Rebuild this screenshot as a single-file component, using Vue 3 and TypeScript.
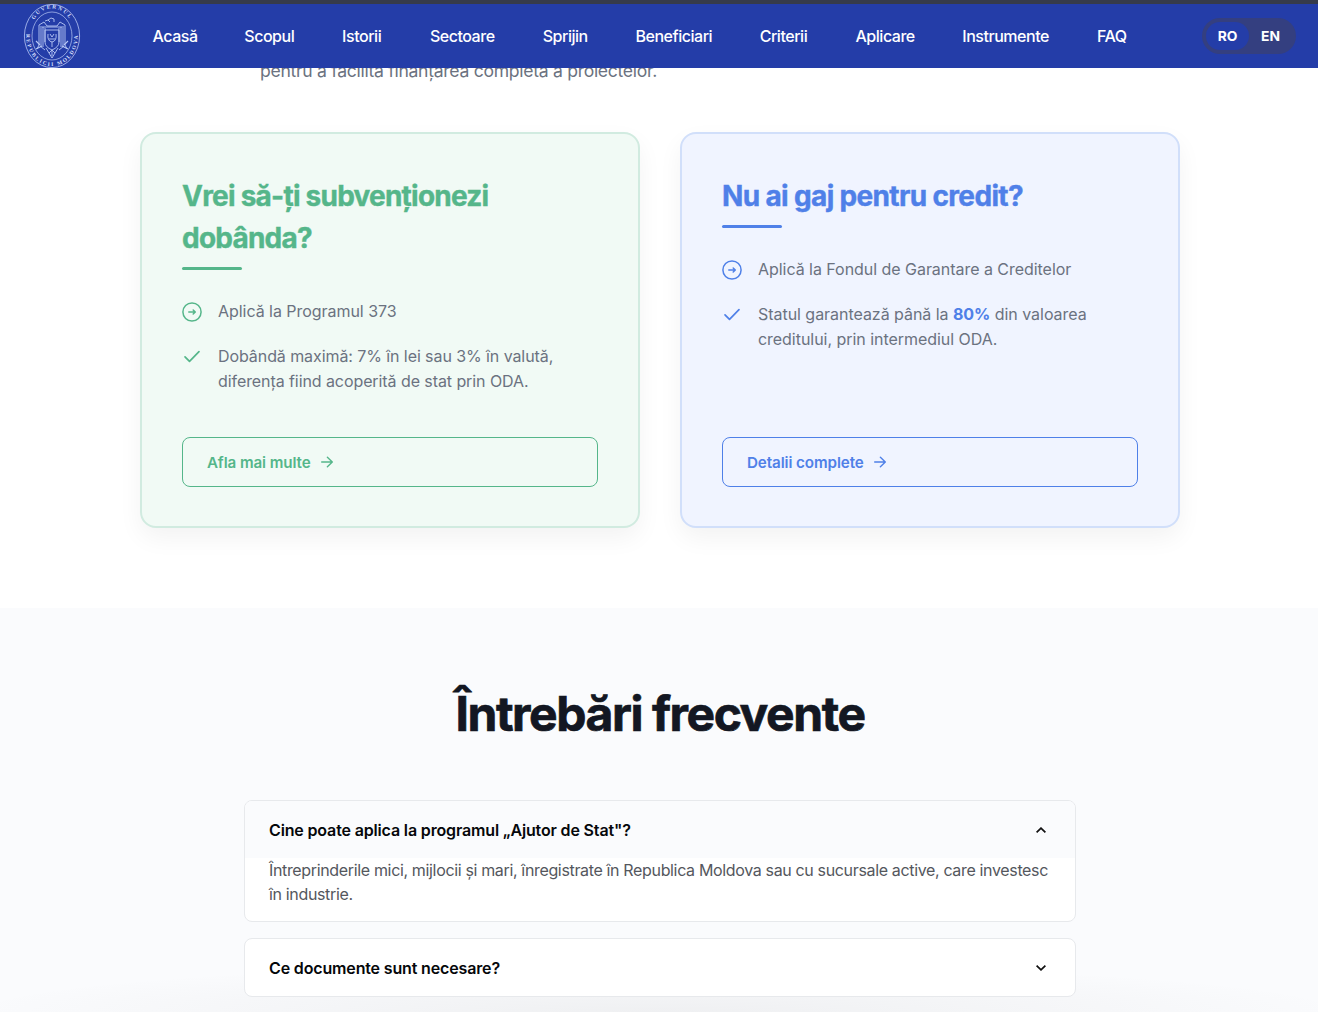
<script setup lang="ts">
import { ref } from 'vue'

interface NavItem { label: string; width: number }
interface Faq { question: string; answer: string }

const nav: NavItem[] = [
  { label: 'Acasă', width: 44 },
  { label: 'Scopul', width: 50 },
  { label: 'Istorii', width: 40 },
  { label: 'Sectoare', width: 65 },
  { label: 'Sprijin', width: 45 },
  { label: 'Beneficiari', width: 76.4 },
  { label: 'Criterii', width: 48 },
  { label: 'Aplicare', width: 59 },
  { label: 'Instrumente', width: 87 },
  { label: 'FAQ', width: 30 },
]

const faqs: Faq[] = [
  {
    question: 'Cine poate aplica la programul „Ajutor de Stat"?',
    answer: 'Întreprinderile mici, mijlocii și mari, înregistrate în Republica Moldova sau cu sucursale active, care investesc în industrie.',
  },
  { question: 'Ce documente sunt necesare?', answer: '' },
]

const open = ref(0)
const lang = ref('RO')
</script>

<template>
  <div class="page">
    <header class="header">
      <svg class="seal" viewBox="0 0 58 66" fill="none" stroke="#b9c8f5">
        <defs>
          <path id="ring-top" d="M7.500 31 A21.500 25.500 0 0 1 50.500 31" />
          <path id="ring-bottom" d="M4.800 23 A25.800 29.700 0 1 0 53.200 23" />
        </defs>
        <ellipse cx="29" cy="33" rx="27.600" ry="31.600" stroke-width="0.8" />
        <ellipse cx="29" cy="33" rx="20" ry="24" stroke-width="0.7" />
        <g class="seal-text" fill="#d5dffb" stroke="none" text-anchor="middle">
          <text><textPath href="#ring-top" startOffset="50%">GUVERNUL</textPath></text>
          <text><textPath href="#ring-bottom" startOffset="50%">REPUBLICII MOLDOVA</textPath></text>
        </g>
        <g stroke-width="0.9">
          <path d="M27 19 l-2-2 3-2 3 1 0 3 M25 17 l-3 1" />
          <path d="M16 22 l5-3 3 4 10 0 3-4 5 3 M17 24 h24" />
          <path d="M16 22 v20 l-2 4 M42 22 v20 l2 4 M18 25 v18 M20 24 v20 M40 25 v18 M38 24 v20 M22 25 v14 M36 25 v14" />
          <path d="M22 27 h14 v12 q0 5-7 8 q-7-3-7-8z" />
          <path d="M25 31 q-1 7 4 8 q5-1 4-8 M27 31 l2 3 2-3 M26 36 h6 M29 39 v5" />
          <path d="M17 43 l5 4 M41 43 l-5 4 M23 45 l3 5 3-3 3 3 3-5 M26 50 l3 5 3-5 M29 47 v6" />
          <path d="M13 38 l4 4 M45 38 l-4 4 M13 46 l6-3 M45 46 l-6-3" stroke-width="1.1" />
        </g>
      </svg>
      <nav class="nav">
        <a v-for="item in nav" :key="item.label" :style="{ width: item.width + 'px' }">{{ item.label }}</a>
      </nav>
      <div class="lang">
        <button v-for="l in ['RO', 'EN']" :key="l" :class="{ active: lang === l }" @click="lang = l">{{ l }}</button>
      </div>
    </header>

    <main>
      <section class="support">
        <p class="lead">pentru a facilita finanțarea completă a proiectelor.</p>
        <div class="cards">
          <article class="card green">
            <h3>Vrei să-ți subvenționezi dobânda?</h3>
            <ul>
              <li>
                <svg class="ico" viewBox="0 0 20 20"><circle cx="10" cy="10" r="9.1" /><path d="M6.800 10h6.400M11.200 8 13.300 10l-2.100 2" /></svg>
                <span>Aplică la Programul 373</span>
              </li>
              <li>
                <svg class="ico check" viewBox="0 0 20 20"><path d="m3 9.800 4.500 4.500L17 4.600" /></svg>
                <span class="tight">Dobândă maximă: 7% în lei sau 3% în valută,<br>diferența fiind acoperită de stat prin ODA.</span>
              </li>
            </ul>
            <a class="btn"><span>Afla mai multe</span>
              <svg viewBox="0 0 12 12"><path d="M.7 6h10.600M6.400 1.200 11.300 6l-4.900 4.800" /></svg>
            </a>
          </article>
          <article class="card blue">
            <h3>Nu ai gaj pentru credit?</h3>
            <ul>
              <li>
                <svg class="ico" viewBox="0 0 20 20"><circle cx="10" cy="10" r="9.1" /><path d="M6.800 10h6.400M11.200 8 13.300 10l-2.100 2" /></svg>
                <span>Aplică la Fondul de Garantare a Creditelor</span>
              </li>
              <li>
                <svg class="ico check" viewBox="0 0 20 20"><path d="m3 9.800 4.500 4.500L17 4.600" /></svg>
                <span>Statul garantează până la <b>80%</b> din valoarea<br>creditului, prin intermediul ODA.</span>
              </li>
            </ul>
            <a class="btn"><span>Detalii complete</span>
              <svg viewBox="0 0 12 12"><path d="M.7 6h10.600M6.400 1.200 11.300 6l-4.900 4.800" /></svg>
            </a>
          </article>
        </div>
      </section>

      <section class="faq">
        <h2>Întrebări frecvente</h2>
        <div v-for="(f, i) in faqs" :key="i" class="item" :class="{ open: open === i }">
          <button class="q" @click="open = i">
            <span>{{ f.question }}</span>
            <svg viewBox="0 0 10 6"><path :d="open === i ? 'M.6 5.300 5 1.200l4.400 4.100' : 'M.6.7 5 4.800 9.400.7'" /></svg>
          </button>
          <p v-if="open === i" class="a">{{ f.answer }}</p>
        </div>
      </section>
    </main>
  </div>
</template>

<style>
body { background: #fff; }
</style>

<style scoped>
* { box-sizing: border-box; }
.page {
  height: 1012px;
  overflow: hidden;
  font-family: Inter, "Liberation Sans", sans-serif;
  font-size: 16px;
  display: flex;
  flex-direction: column;
  color: #6b7280;
}
h2, h3, p, ul { margin: 0; padding: 0; }
button { border: 0; padding: 0; background: none; font: inherit; color: inherit; letter-spacing: inherit; }

.header {
  position: relative;
  z-index: 2;
  flex: none;
  height: 68px;
  border-top: 4px solid #363b4b;
  background: #243da8;
  display: flex;
  align-items: center;
  padding-left: 23px;
}
.seal { width: 58px; height: 66px; flex: none; }
.seal-text { font: 600 5.5px "Liberation Serif", serif; letter-spacing: 1.6px; }
.nav { display: flex; gap: 47.8px; margin-left: 71.5px; }
.nav a {
  color: #fff;
  font-weight: 500;
  letter-spacing: -0.47px;
  white-space: nowrap;
  line-height: 24px;
}
.lang {
  margin-left: auto;
  margin-right: 22px;
  width: 94px;
  height: 36px;
  padding: 4px;
  border-radius: 18px;
  background: #343f80;
  display: flex;
}
.lang button { flex: 1; border-radius: 14px; color: #fff; font-weight: 700; font-size: 13.8px; line-height: 28px; }
.lang .active { background: #243da8; }

main { flex: 1; display: flex; flex-direction: column; min-height: 0; }
.support { height: 540px; flex: none; padding-left: 140px; display: flex; flex-direction: column; }
.lead {
  margin: -14px 0 0 120px;
  height: 78px;
  font-size: 17.6px;
  line-height: 34px;
  letter-spacing: -0.3px;
  white-space: nowrap;
}
.cards { display: flex; gap: 40px; }
.card {
  width: 500px;
  height: 396px;
  border: 2px solid;
  border-radius: 16px;
  padding: 41px 40px 39px;
  display: flex;
  flex-direction: column;
  box-shadow: 0 10px 25px rgba(0, 0, 0, 0.05);
}
.green { --c: #55b68a; background: #f1faf5; border-color: #d1ebe0; }
.blue { --c: #4f80e8; background: #f0f4ff; border-color: #d1dffa; }
h3 { font-size: 28px; font-weight: 700; line-height: 42px; letter-spacing: -0.77px; color: var(--c); -webkit-text-stroke: 0.4px var(--c); }
.blue h3 { letter-spacing: -0.65px; }
h3::after { content: ""; display: block; width: 60px; height: 3px; border-radius: 2px; margin-top: 8px; background: var(--c); }
ul { list-style: none; margin-top: 29px; display: flex; flex-direction: column; gap: 20px; }
li { display: flex; gap: 16px; line-height: 25px; letter-spacing: -0.04px; white-space: nowrap; }
.tight { letter-spacing: -0.08px; }
.ico { width: 20px; height: 20px; flex: none; margin-top: 3px; fill: none; stroke: var(--c); stroke-width: 1.5; stroke-linecap: round; stroke-linejoin: round; }
.check { stroke-width: 1.7; }
b { color: var(--c); font-weight: 700; }
.btn {
  margin-top: auto;
  height: 50px;
  border: 1px solid var(--c);
  border-radius: 8px;
  display: flex;
  align-items: center;
  padding-left: 24px;
  gap: 10px;
  color: var(--c);
  font-size: 15.2px;
  font-weight: 600;
  letter-spacing: -0.1px;
}
.btn svg { width: 12px; height: 12px; fill: none; stroke: currentColor; stroke-width: 1.4; stroke-linecap: round; stroke-linejoin: round; }

.faq {
  flex: 1;
  background:
    radial-gradient(ellipse 700px 50px at 50% 100%, rgba(60, 60, 60, 0.06), transparent),
    #fafbfd;
  display: flex;
  flex-direction: column;
  align-items: center;
  padding-left: 2px;
}
h2 { margin-top: 71px; height: 121px; font-size: 48px; line-height: 70px; font-weight: 700; letter-spacing: -1.43px; color: #131722; -webkit-text-stroke: 0.7px #131722; white-space: nowrap; }
.item { width: 832px; flex: none; margin-bottom: 16px; border: 1px solid #e7e9ec; border-radius: 8px; background: #fff; overflow: hidden; }
.q { width: 100%; height: 57px; padding: 0 29px 0 24px; display: flex; align-items: center; justify-content: space-between; color: #05070a; font-weight: 600; letter-spacing: -0.15px; }
.open .q { background: #fafbfd; }
.q svg { width: 10px; height: 6px; fill: none; stroke: #111; stroke-width: 1.8; }
.a { padding: 0 20px 15px 24px; line-height: 24px; letter-spacing: -0.345px; color: #54575d; }
</style>
